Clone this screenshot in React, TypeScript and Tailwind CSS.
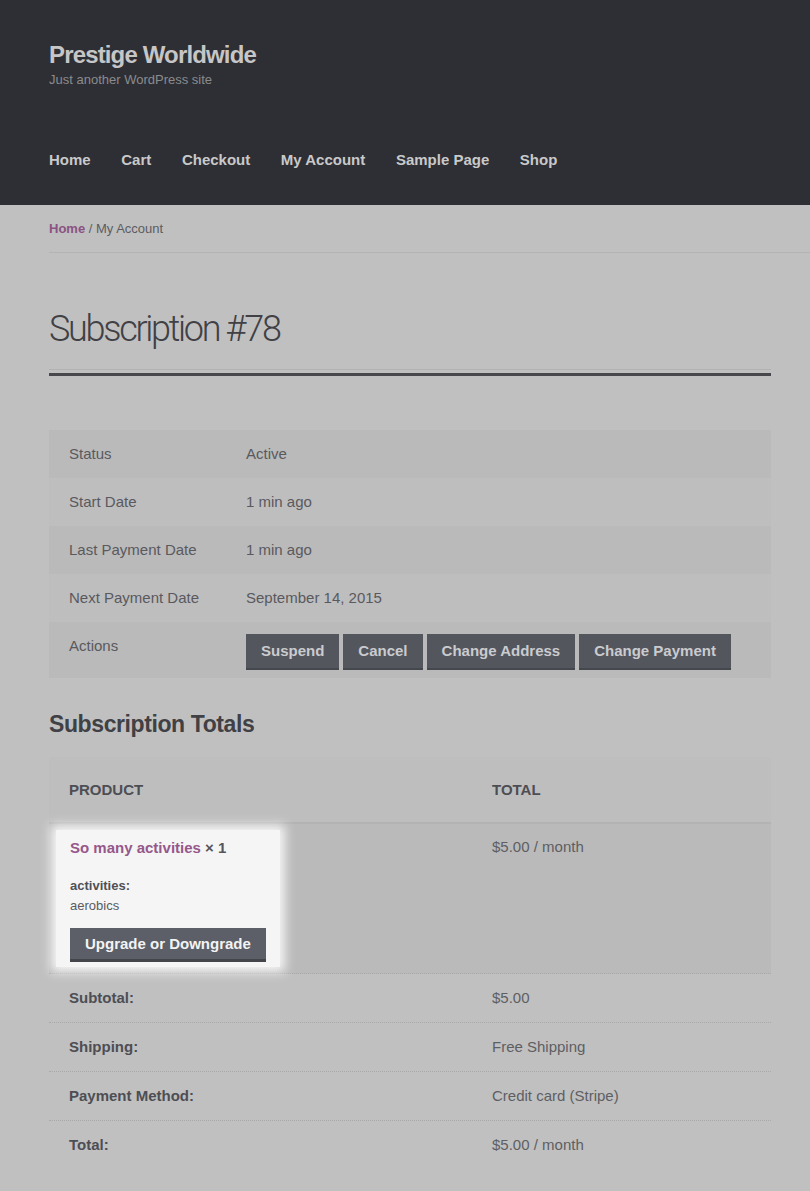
import React from "react";

const font = { fontFamily: '"Liberation Sans", Arial, sans-serif' };

function Btn({ children }: { children: React.ReactNode }) {
  return (
    <span className="inline-flex h-[36px] items-center justify-center border-b-[2px] border-[#45474e] bg-[#54565e] px-[15px] text-[15px] font-bold leading-[20px] text-[#cacbce]">
      {children}
    </span>
  );
}

export default function App() {
  const info: [string, string][] = [
    ["Status", "Active"],
    ["Start Date", "1 min ago"],
    ["Last Payment Date", "1 min ago"],
    ["Next Payment Date", "September 14, 2015"],
  ];
  const totals: [string, string][] = [
    ["Subtotal:", "$5.00"],
    ["Shipping:", "Free Shipping"],
    ["Payment Method:", "Credit card (Stripe)"],
    ["Total:", "$5.00 / month"],
  ];
  return (
    <div className="min-h-[1191px] w-[810px] overflow-hidden bg-[#c0c0c0]" style={font}>
      {/* Header */}
      <header className="h-[205px] bg-[#2e2f34] pl-[49px] pt-[41px]">
        <div className="text-[24px] font-bold leading-[28px] tracking-[-0.85px] text-[#c6c6c7]">
          Prestige Worldwide
        </div>
        <div className="mt-[3px] text-[13px] leading-[16px] text-[#8b8b8d]">
          Just another WordPress site
        </div>
        <nav className="mt-[62px] flex gap-[30.6px] text-[15px] font-bold leading-[20px] text-[#c9c9ca]">
          <span>Home</span>
          <span>Cart</span>
          <span>Checkout</span>
          <span>My Account</span>
          <span>Sample Page</span>
          <span>Shop</span>
        </nav>
      </header>

      {/* Breadcrumb */}
      <div className="ml-[49px] border-b border-[#b4b4b4] pb-[15px] pt-[16px] text-[13px] leading-[16px] text-[#5c5c61]">
        <span className="font-bold text-[#8a5383]">Home</span> / My Account
      </div>

      <main className="ml-[49px] w-[722px]">
        {/* Title */}
        <h1
          className="mt-[54px] text-[36px] font-light leading-[44px] tracking-[-2.3px] text-[#404045]"
          style={{ fontFamily: 'Roboto, "Liberation Sans", sans-serif' }}
        >
          Subscription #78
        </h1>
        <div className="mt-[18px] h-px bg-[#b2b2b2]" />
        <div className="mt-[3px] h-[3px] bg-[#48474c]" />

        {/* Info table */}
        <div className="mt-[54px] text-[15px] leading-[24px] text-[#59595e]">
          {info.map(([k, v], i) => (
            <div key={k} className={`flex ${i % 2 === 0 ? "bg-[#bababa]" : "bg-[#bebebe]"}`}>
              <div className="w-[197px] py-[12px] pl-[20px]">{k}</div>
              <div className="py-[12px]">{v}</div>
            </div>
          ))}
          <div className="flex bg-[#bababa]">
            <div className="w-[197px] pl-[20px] pt-[12px]">Actions</div>
            <div className="flex gap-[4px] pb-[8px] pt-[12px]">
              <Btn>Suspend</Btn>
              <Btn>Cancel</Btn>
              <Btn>Change Address</Btn>
              <Btn>Change Payment</Btn>
            </div>
          </div>
        </div>

        {/* Totals */}
        <h2 className="mt-[32px] text-[23px] font-bold leading-[28px] tracking-[-0.4px] text-[#404045]">
          Subscription Totals
        </h2>

        <div className="mt-[19px] text-[15px] leading-[25px]">
          <div className="flex border-b-[2px] border-[#b3b3b3] bg-[#bebebe] font-bold text-[#4d4e54]">
            <div className="w-[423px] py-[20px] pl-[20px]">PRODUCT</div>
            <div className="py-[20px] pl-[20px]">TOTAL</div>
          </div>

          <div className="flex h-[150px] border-b border-dotted border-[#a9a9a9] bg-[#bababa]">
            <div className="w-[423px] pl-[7px] pt-[6px]">
              <div className="relative h-[137px] w-[224px] bg-[#f5f5f5] pl-[14px] pt-[6px] shadow-[0_0_10px_5px_#f5f5f5]">
                <div className="leading-[24px]">
                  <span className="font-bold text-[#96588a]">So many activities</span>{" "}
                  <span className="font-bold text-[#55565b]">× 1</span>
                </div>
                <div className="mt-[18px] text-[13px] font-bold leading-[16px] text-[#4f5055]">activities:</div>
                <div className="mt-[4px] text-[13px] leading-[16px] text-[#5a5a5f]">aerobics</div>
                <div className="mt-[14px] inline-flex h-[34px] items-center border-b-[3px] border-[#43454b] bg-[#5c5f67] px-[15px] text-[15px] font-bold leading-[20px] text-[#f3f3f3]">
                  Upgrade or Downgrade
                </div>
              </div>
            </div>
            <div className="pl-[20px] pt-[10px] text-[#5e5e63]">$5.00 / month</div>
          </div>

          {totals.map(([k, v], i) => (
            <div
              key={k}
              className={`flex leading-[24px] ${i < totals.length - 1 ? "border-b border-dotted border-[#a9a9a9]" : ""}`}
            >
              <div className="w-[423px] py-[12px] pl-[20px] font-bold text-[#4d4e54]">{k}</div>
              <div className="py-[12px] pl-[20px] text-[#5e5e63]">{v}</div>
            </div>
          ))}
        </div>
      </main>
    </div>
  );
}
